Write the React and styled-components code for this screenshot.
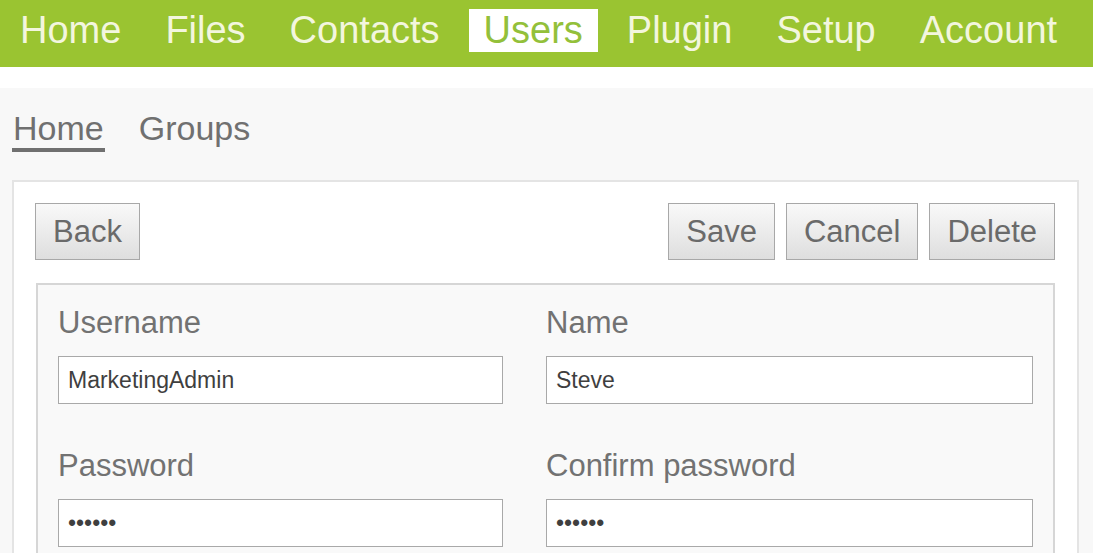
import React from 'react';
import styled, {createGlobalStyle} from 'styled-components';

const GlobalStyle = createGlobalStyle`
    html, body {
        margin: 0;
        padding: 0;
        background: #ffffff;
        font-family: "Liberation Sans", Arial, sans-serif;
        overflow: hidden;
    }
`;

const TopBar = styled.nav`
    display: flex;
    align-items: flex-start;
    gap: 14px;
    height: 67px;
    box-sizing: border-box;
    padding: 9px 0 0 5px;
    background: #9ac431;
`;

const TopItem = styled.a`
    display: block;
    padding: 0 15px;
    font-size: 38px;
    line-height: 43px;
    color: ${props => props.active ? '#93c03a' : '#f3f6de'};
    background: ${props => props.active ? '#ffffff' : 'transparent'};
    text-decoration: none;
    cursor: pointer;
`;

const Page = styled.main`
    margin-top: 21px;
    background: #f8f8f8;
    padding: 21px 14px 0 12px;
    min-height: 480px;
`;

const SubNav = styled.div`
    display: flex;
    gap: 33px;
    margin-bottom: 28px;
`;

const SubItem = styled.a`
    display: block;
    font-size: 34px;
    line-height: 39px;
    color: #707070;
    border-bottom: 4px solid ${props => props.active ? '#707070' : 'transparent'};
    padding: 0 1px;
    cursor: pointer;
`;

const Panel = styled.section`
    background: #ffffff;
    border: 2px solid #e4e4e4;
    padding: 21px 22px 0 21px;
    min-height: 400px;
`;

const Toolbar = styled.div`
    display: flex;
    align-items: center;
    gap: 11px;
    margin-bottom: 23px;
`;

const Spacer = styled.div`
    flex: 1;
`;

const Button = styled.button`
    height: 57px;
    padding: 0 17px;
    border: 1px solid #a8a8a8;
    border-radius: 0;
    background: linear-gradient(to bottom, #f9f9f9, #dedede);
    font-family: "Liberation Sans", Arial, sans-serif;
    font-size: 31px;
    color: #6a6a6a;
    cursor: pointer;
`;

const FormBox = styled.div`
    display: grid;
    grid-template-columns: 445px 487px;
    column-gap: 43px;
    row-gap: 44px;
    margin-left: 1px;
    padding: 20px 21px 40px 20px;
    background: #f9f9f9;
    border: 2px solid #d6d6d6;
`;

const Field = styled.div`
    display: flex;
    flex-direction: column;
`;

const Label = styled.label`
    font-size: 31px;
    line-height: 36px;
    color: #727272;
    margin-bottom: 15px;
`;

const Input = styled.input`
    height: 48px;
    box-sizing: border-box;
    padding: 0 9px;
    border: 1px solid #a9a9a9;
    background: #ffffff;
    font-family: "Liberation Sans", Arial, sans-serif;
    font-size: 23px;
    color: #3f3f3f;
    outline: none;
`;

const menu = ['Home', 'Files', 'Contacts', 'Users', 'Plugin', 'Setup', 'Account'];

const fields = [
    {label: 'Username', value: 'MarketingAdmin', type: 'text'},
    {label: 'Name', value: 'Steve', type: 'text'},
    {label: 'Password', value: 'secret', type: 'password'},
    {label: 'Confirm password', value: 'secret', type: 'password'},
];

const App = () => {
    return (
        <>
            <GlobalStyle />
            <TopBar>
                {menu.map(item => (
                    <TopItem key={item} active={item === 'Users' ? 1 : 0}>{item}</TopItem>
                ))}
            </TopBar>
            <Page>
                <SubNav>
                    <SubItem active={1}>Home</SubItem>
                    <SubItem>Groups</SubItem>
                </SubNav>
                <Panel>
                    <Toolbar>
                        <Button>Back</Button>
                        <Spacer />
                        <Button>Save</Button>
                        <Button>Cancel</Button>
                        <Button>Delete</Button>
                    </Toolbar>
                    <FormBox>
                        {fields.map(f => (
                            <Field key={f.label}>
                                <Label>{f.label}</Label>
                                <Input type={f.type} defaultValue={f.value} readOnly />
                            </Field>
                        ))}
                    </FormBox>
                </Panel>
            </Page>
        </>
    );
};

export default App;
